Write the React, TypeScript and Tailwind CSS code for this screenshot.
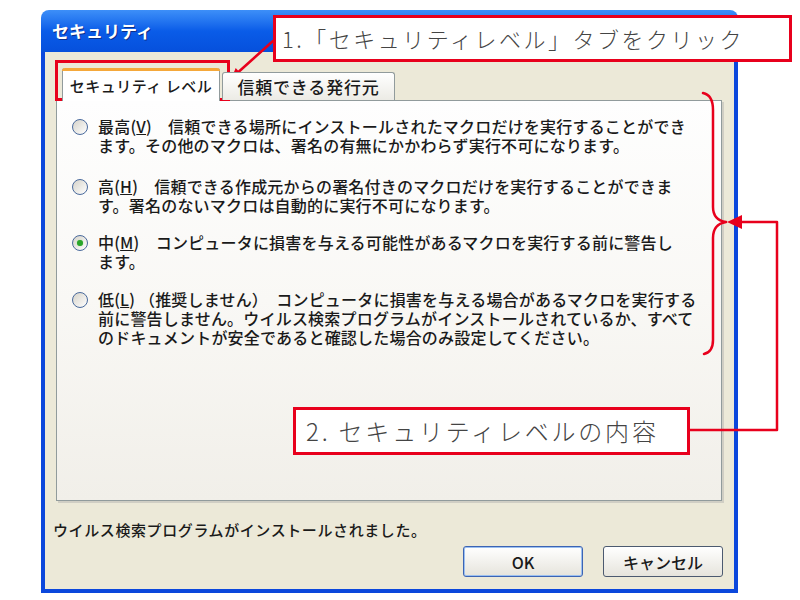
import React from 'react';

const Radio = ({ checked }: { checked?: boolean }) => (
  <div className="w-[16px] h-[16px] shrink-0 rounded-full border border-[#4a6a9c] bg-gradient-to-br from-[#d6d3ca] to-[#ffffff] flex items-center justify-center mt-[2px]">
    {checked && <div className="w-[6px] h-[6px] rounded-full bg-[#2aa52a] shadow-[0_0_1px_#7fd07f]" />}
  </div>
);

const Option = ({ checked, lines, className }: { checked?: boolean; lines: React.ReactNode[]; className?: string }) => (
  <div className={`flex items-start gap-[10px] ${className ?? ''}`}>
    <Radio checked={checked} />
    <div className="text-[16px] leading-[19px] tracking-[0.2px] font-medium text-[#1a1a1a] whitespace-nowrap">
      {lines.map((l, i) => (
        <div key={i}>{l}</div>
      ))}
    </div>
  </div>
);

export default function App() {
  return (
    <div className="relative w-[800px] h-[600px] bg-white overflow-hidden font-['Noto_Sans_CJK_JP','Noto_Sans',sans-serif]">
      <div className="pl-[41px] pt-[10px]">
        <div className="w-[697px] h-[583px] flex flex-col">
          {/* title bar */}
          <div className="h-[42px] rounded-t-[8px] bg-gradient-to-b from-[#3d8ff8] via-[#0a5ce8] to-[#0650dc] flex items-center pl-[11px]">
            <span className="text-white font-bold text-[17px] [text-shadow:1px_1px_0_#0a2f8a]">セキュリティ</span>
          </div>
          {/* body */}
          <div className="flex-1 bg-[#ece9d8] border-x-[4px] border-b-[4px] border-[#0b47dc] flex flex-col pt-[16px] pl-[11px] pr-[12px]">
            {/* tabs */}
            <div className="flex items-end h-[32px] pl-[6px] gap-[2px] relative z-10">
              <div className="w-[158px] h-[33px] -mb-[1px] bg-white border-x border-[#919b9c] rounded-t-[3px] flex flex-col">
                <div className="h-[3px] bg-[#f5a83a] rounded-t-[3px] -mx-[1px]" />
                <div className="flex-1 flex items-center justify-center text-[15px] tracking-[0.5px] font-medium text-[#1a1a1a]">セキュリティ レベル</div>
              </div>
              <div className="w-[173px] h-[28px] bg-gradient-to-b from-[#ffffff] to-[#ecebe5] border border-b-0 border-[#919b9c] rounded-t-[3px] flex items-center justify-center text-[17px] tracking-[0.8px] font-medium text-[#1a1a1a]">
                信頼できる発行元
              </div>
            </div>
            {/* panel */}
            <div className="h-[401px] border border-[#919b9c] bg-gradient-to-b from-[#fefefe] via-[#f9f8f5] to-[#f1efe9] shadow-[2px_2px_0_#d0cec4] pt-[16px] pl-[15px]">
              <Option
                lines={[
                  <>最高(<u>V</u>)　信頼できる場所にインストールされたマクロだけを実行することができ</>,
                  'ます。その他のマクロは、署名の有無にかかわらず実行不可になります。',
                ]}
              />
              <Option
                className="mt-[22px]"
                lines={[
                  <>高(<u>H</u>)　信頼できる作成元からの署名付きのマクロだけを実行することができま</>,
                  'す。署名のないマクロは自動的に実行不可になります。',
                ]}
              />
              <Option
                checked
                className="mt-[18px]"
                lines={[
                  <>中(<u>M</u>)　コンピュータに損害を与える可能性があるマクロを実行する前に警告し</>,
                  'ます。',
                ]}
              />
              <Option
                className="mt-[19px]"
                lines={[
                  <>低(<u>L</u>) （推奨しません）　コンピュータに損害を与える場合があるマクロを実行する</>,
                  '前に警告しません。ウイルス検索プログラムがインストールされているか、すべて',
                  'のドキュメントが安全であると確認した場合のみ設定してください。',
                ]}
              />
            </div>
            {/* status + buttons */}
            <div className="mt-[19px] -ml-[3px] text-[15px] leading-[20px] tracking-[0.6px] font-medium text-[#1a1a1a]">
              ウイルス検索プログラムがインストールされました。
            </div>
            <div className="mt-[6px] flex justify-end gap-[20px] -mr-[1px]">
              <button className="w-[120px] h-[31px] rounded-[3px] border border-[#3c64b4] bg-gradient-to-b from-[#ffffff] to-[#e6e4dc] shadow-[inset_0_0_0_1px_#9cc0f0] text-[16px] font-medium text-[#1a1a1a]">
                OK
              </button>
              <button className="w-[120px] h-[31px] rounded-[3px] border border-[#4c5a70] bg-gradient-to-b from-[#ffffff] to-[#e6e4dc] text-[16px] font-medium text-[#1a1a1a]">
                キャンセル
              </button>
            </div>
          </div>
        </div>
      </div>

      {/* callout 1 */}
      <div className="absolute left-[273px] top-[15px] w-[519px] h-[47px] bg-white border-[3px] border-[#e8001c] flex items-center pl-[6px] text-[22px] font-light tracking-[2.5px] text-[#444]">
        1.「セキュリティレベル」タブをクリック
      </div>
      {/* tab highlight */}
      <div className="absolute left-[55px] top-[60px] w-[175px] h-[41px] border-[3px] border-[#e8001c]" />
      {/* callout 2 */}
      <div className="absolute left-[293px] top-[407px] w-[397px] h-[48px] bg-white border-[3px] border-[#e8001c] flex items-center pl-[10px] text-[24px] font-light tracking-[2.8px] text-[#444]">
        2. セキュリティレベルの内容
      </div>

      <svg className="absolute inset-0 pointer-events-none" width="800" height="600" viewBox="0 0 800 600">
        <g stroke="#e8001c" strokeWidth="2.5" fill="none" strokeLinecap="round" strokeLinejoin="round">
          <line x1="273" y1="41" x2="239" y2="71.5" />
          <path d="M703 93 Q713 95 713 110 L713 207 Q713 220 726 222 Q713 224 713 238 L713 340 Q713 352 704 354" />
          <path d="M690 430 L777 430 L777 222 L740 222" />
        </g>
        <polygon points="231,79 242.4,75.2 235.7,67.9" fill="#e8001c" />
        <polygon points="727,222 742,215 742,229" fill="#e8001c" />
      </svg>
    </div>
  );
}
